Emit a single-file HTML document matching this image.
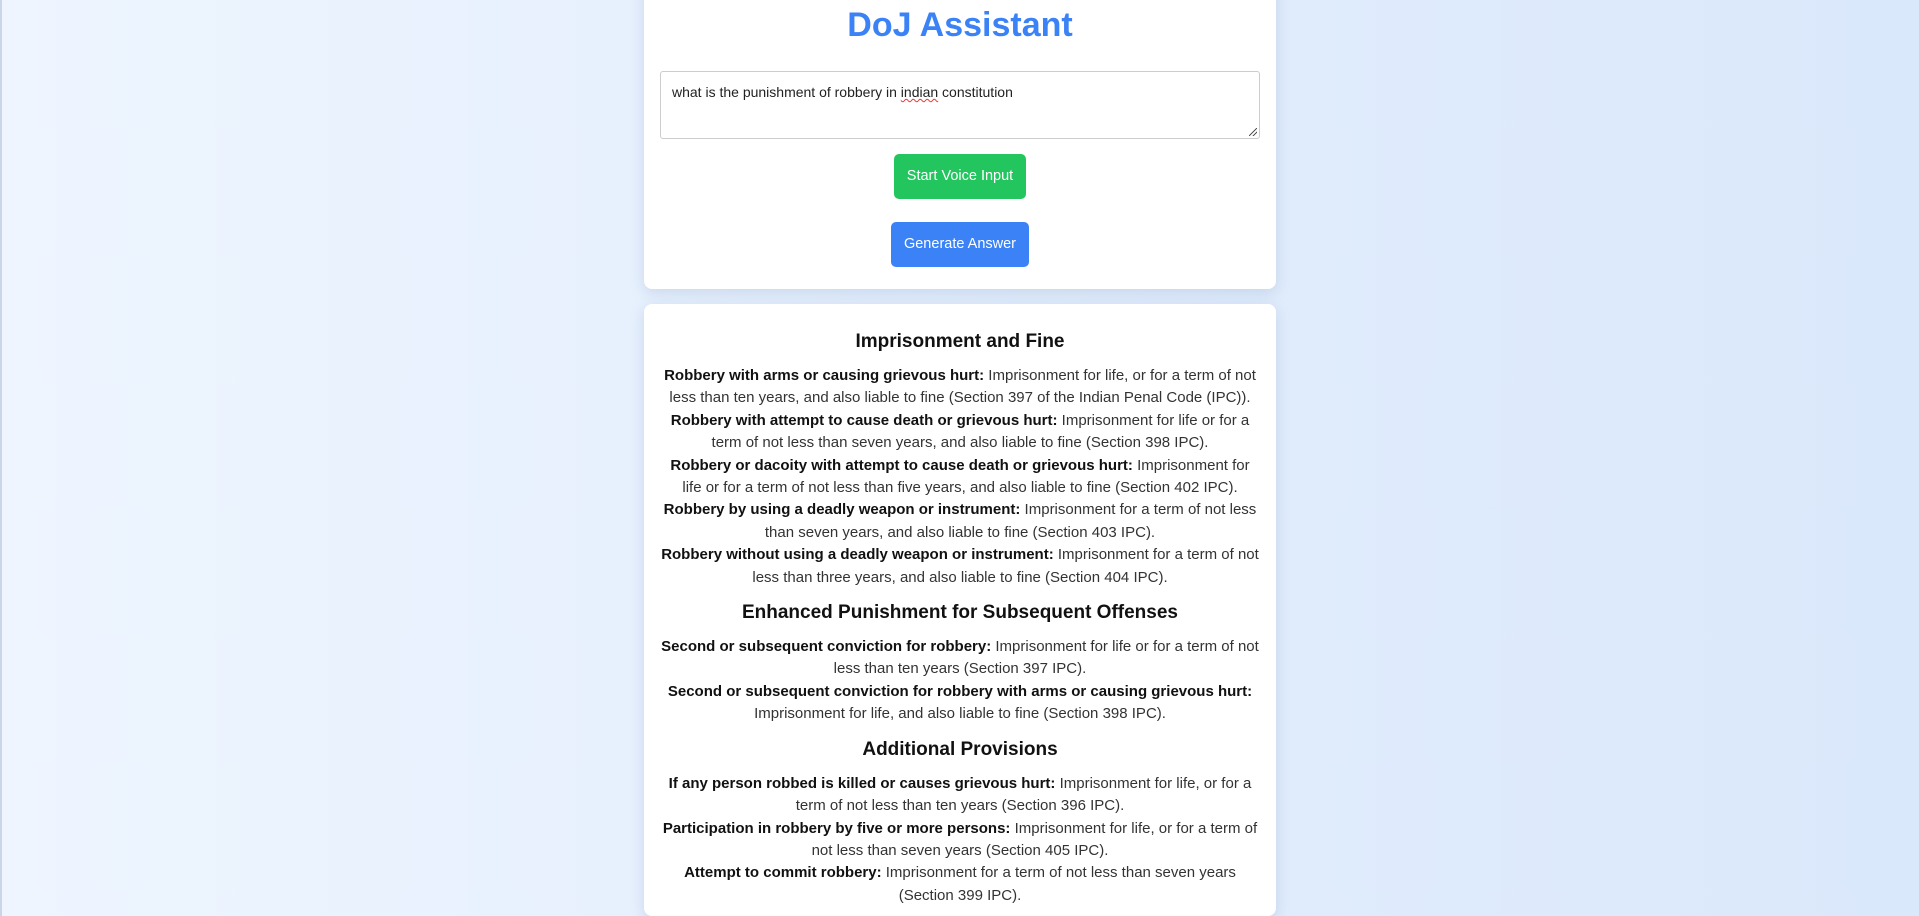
<!DOCTYPE html>
<html><head><meta charset="utf-8">
<style>
html,body{margin:0;padding:0;overflow:hidden;height:916px}
body{width:1919px;height:916px;overflow:hidden;background:linear-gradient(90deg,#eef5ff 0%,#e3eefc 50%,#dae8fb 100%);font-family:"Liberation Sans",Arial,sans-serif;position:relative;border-left:2px solid #c9d6e8;box-sizing:border-box}
.card{position:absolute;left:642px;width:632px;background:#fff;border-radius:8px;box-shadow:0 4px 14px rgba(100,130,180,0.22)}
#c1{top:-20px;height:309px}
#c2{top:304px;height:612px}
h1{position:absolute;top:21px;left:0;right:0;margin:0;text-align:center;font-size:34px;line-height:48px;color:#3b82f6;font-weight:bold}
.ta{position:absolute;left:16px;top:91px;width:598px;height:66px;border:1px solid #ccc;border-radius:3px;box-sizing:content-box}
.ta span{position:absolute;left:11px;top:12px;font-size:14px;color:#222}
.ta span u{text-decoration:underline wavy #e33;text-decoration-thickness:1px}
.rz{position:absolute;right:2px;bottom:2px;width:8px;height:8px;background:linear-gradient(135deg,transparent 45%,#555 46%,#555 54%,transparent 55%,transparent 70%,#555 71%,#555 79%,transparent 80%)}
.btn{position:absolute;color:#fff;font-size:14.5px;border-radius:5px;text-align:center}
#b1{left:250px;top:174px;width:132px;height:45px;line-height:45px;background:#22c55e}
#b2{left:247px;top:242px;width:138px;height:45px;line-height:45px;background:#3b82f6}
.content{padding-top:26px;text-align:center;white-space:nowrap}
h3{margin:0;font-size:19px;line-height:24px;color:#111;font-weight:bold}
h3+p{margin-top:11px}
p{margin:0 0 12px;font-size:15px;line-height:22.4px;color:#333}
b{color:#111}
</style></head><body>
<div class="card" id="c1">
<h1>DoJ Assistant</h1>
<div class="ta"><span>what is the punishment of robbery in <u>indian</u> constitution</span><div class="rz"></div></div>
<div class="btn" id="b1">Start Voice Input</div>
<div class="btn" id="b2">Generate Answer</div>
</div>
<div class="card" id="c2"><div class="content">
<h3>Imprisonment and Fine</h3>
<p><b>Robbery with arms or causing grievous hurt:</b> Imprisonment for life, or for a term of not<br>less than ten years, and also liable to fine (Section 397 of the Indian Penal Code (IPC)).<br>
<b>Robbery with attempt to cause death or grievous hurt:</b> Imprisonment for life or for a<br>term of not less than seven years, and also liable to fine (Section 398 IPC).<br>
<b>Robbery or dacoity with attempt to cause death or grievous hurt:</b> Imprisonment for<br>life or for a term of not less than five years, and also liable to fine (Section 402 IPC).<br>
<b>Robbery by using a deadly weapon or instrument:</b> Imprisonment for a term of not less<br>than seven years, and also liable to fine (Section 403 IPC).<br>
<b>Robbery without using a deadly weapon or instrument:</b> Imprisonment for a term of not<br>less than three years, and also liable to fine (Section 404 IPC).</p>
<h3>Enhanced Punishment for Subsequent Offenses</h3>
<p><b>Second or subsequent conviction for robbery:</b> Imprisonment for life or for a term of not<br>less than ten years (Section 397 IPC).<br>
<b>Second or subsequent conviction for robbery with arms or causing grievous hurt:</b><br>Imprisonment for life, and also liable to fine (Section 398 IPC).</p>
<h3>Additional Provisions</h3>
<p><b>If any person robbed is killed or causes grievous hurt:</b> Imprisonment for life, or for a<br>term of not less than ten years (Section 396 IPC).<br>
<b>Participation in robbery by five or more persons:</b> Imprisonment for life, or for a term of<br>not less than seven years (Section 405 IPC).<br>
<b>Attempt to commit robbery:</b> Imprisonment for a term of not less than seven years<br>(Section 399 IPC).</p>
</div></div>
</body></html>
